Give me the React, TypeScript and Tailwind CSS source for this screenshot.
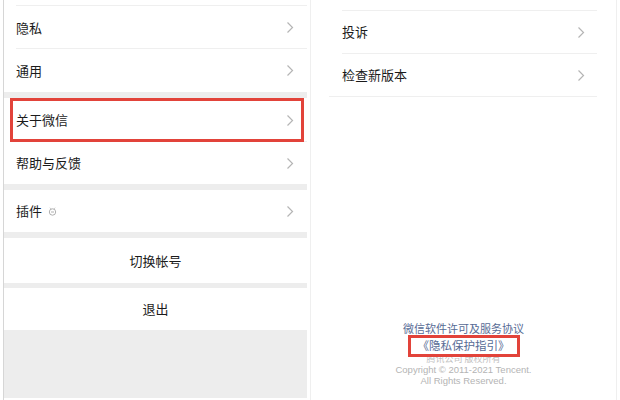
import React from "react"

const font = { fontFamily: '"Noto Sans CJK SC", "Liberation Sans", sans-serif' }

function Chevron() {
  return (
    <svg width="8" height="13" viewBox="0 0 8 13" className="shrink-0">
      <polyline points="1.5,1.5 6.5,6.5 1.5,11.5" fill="none" stroke="#b5b5b5" strokeWidth="1.2" />
    </svg>
  )
}

function Row({ label, extra, line = true, h = "h-[43px]" }: { label: string; extra?: React.ReactNode; line?: boolean; h?: string }) {
  return (
    <div className={`relative flex ${h} items-center bg-white pl-[12px] pr-[13px]`}>
      <div className="flex flex-1 items-center gap-[6px] text-[13px] text-[#1b1b1b]">
        {label}
        {extra}
      </div>
      <Chevron />
      {line && <div className="absolute bottom-0 left-[12px] right-0 h-px bg-[#efefef]" />}
    </div>
  )
}

function Gap({ h = "h-[6px]" }: { h?: string }) {
  return <div className={`${h} bg-[#ededed]`} />
}

export default function App() {
  return (
    <div className="flex h-[400px] w-[620px] bg-white" style={font}>
      {/* left screen */}
      <div className="ml-[3px] flex w-[304px] flex-col border-l border-[#d6d6d6]">
        <div className="h-[6px] bg-white pl-[12px]">
          <div className="mt-[5px] h-px bg-[#efefef]" />
        </div>
        <Row label="隐私" />
        <Row label="通用" line={false} />
        <Gap />
        <div className="relative">
          <Row label="关于微信" h="h-[44px]" />
          <div className="absolute left-[6px] right-[3px] top-0 bottom-0 border-[3px] border-[#e2433a]" />
        </div>
        <Row label="帮助与反馈" h="h-[42px]" line={false} />
        <Gap />
        <Row
          label="插件"
          h="h-[42px]"
          line={false}
          extra={
            <svg width="9" height="9" viewBox="0 0 9 9">
              <circle cx="4.5" cy="5" r="3.2" fill="none" stroke="#a8a8a8" strokeWidth="0.9" />
              <line x1="3" y1="5" x2="6" y2="5" stroke="#a8a8a8" strokeWidth="0.9" />
              <line x1="2" y1="0.8" x2="3" y2="1.8" stroke="#a8a8a8" strokeWidth="0.9" />
              <line x1="7" y1="0.8" x2="6" y2="1.8" stroke="#a8a8a8" strokeWidth="0.9" />
            </svg>
          }
        />
        <Gap />
        <div className="flex h-[45px] items-center justify-center bg-white text-[13px] text-[#1b1b1b]">切换帐号</div>
        <Gap h="h-[5px]" />
        <div className="flex h-[42px] items-center justify-center bg-white text-[13px] text-[#1b1b1b]">退出</div>
        <div className="flex-1 bg-[#ededed]" />
        <div className="h-[2px] bg-white" />
      </div>

      {/* right screen */}
      <div className="ml-[3px] flex w-[307px] flex-col border-x border-[#efefef]">
        <div className="ml-[31px] mr-[19px] mt-[10px] h-px bg-[#efefef]" />
        <div className="flex h-[42px] items-center pl-[31px] pr-[31px] text-[13px] text-[#1b1b1b]">
          <span className="flex-1">投诉</span>
          <Chevron />
        </div>
        <div className="ml-[31px] mr-[19px] h-px bg-[#efefef]" />
        <div className="flex h-[42px] items-center pl-[31px] pr-[31px] text-[13px] text-[#1b1b1b]">
          <span className="flex-1">检查新版本</span>
          <Chevron />
        </div>
        <div className="ml-[18px] mr-[19px] h-px bg-[#efefef]" />

        <div className="mt-auto mb-[14px] flex flex-col items-center">
          <div className="text-[11px] leading-[14px] text-[#576b95]">微信软件许可及服务协议</div>
          <div className="relative flex h-[22px] w-[112px] items-center justify-center">
            <span className="text-[11.5px] text-[#576b95]">《隐私保护指引》</span>
            <div className="absolute inset-0 border-[3px] border-[#e2433a]" />
          </div>
          <div className="-mt-[4px] text-[9px] leading-[11px] text-[#c2c2c2]">腾讯公司 版权所有</div>
          <div className="text-[9.5px] leading-[11px] text-[#b4b4b4]" style={{ fontFamily: '"Liberation Sans", sans-serif' }}>
            Copyright © 2011-2021 Tencent.
          </div>
          <div className="text-[9.5px] leading-[11px] text-[#b4b4b4]" style={{ fontFamily: '"Liberation Sans", sans-serif' }}>
            All Rights Reserved.
          </div>
        </div>
      </div>
    </div>
  )
}
